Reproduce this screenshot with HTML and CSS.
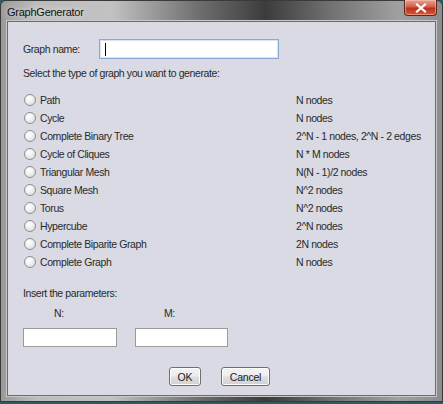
FILE: index.html
```html
<!DOCTYPE html>
<html>
<head>
<meta charset="utf-8">
<link rel="stylesheet" href="styles.css">
</head>
<body>
<div class="window">
  <div class="titlebar">
    <span class="title">GraphGenerator</span>
    <div class="close"><svg width="12" height="10" viewBox="0 0 12 10"><path d="M2 1.5 L10 8.5 M10 1.5 L2 8.5" stroke="#fff" stroke-width="2.2" stroke-linecap="square"/></svg></div>
  </div>
  <div class="client">
    <div class="name-row">
      <span class="lbl name-lbl">Graph name:</span>
      <div class="field name-field"><span class="caret"></span></div>
    </div>
    <div class="lbl select-lbl">Select the type of graph you want to generate:</div>
    <div class="options">
      <div class="opt"><span class="radio"></span><span class="lbl">Path</span></div><div class="lbl info">N nodes</div>
      <div class="opt"><span class="radio"></span><span class="lbl">Cycle</span></div><div class="lbl info">N nodes</div>
      <div class="opt"><span class="radio"></span><span class="lbl">Complete Binary Tree</span></div><div class="lbl info">2^N - 1 nodes, 2^N - 2 edges</div>
      <div class="opt"><span class="radio"></span><span class="lbl">Cycle of Cliques</span></div><div class="lbl info">N * M nodes</div>
      <div class="opt"><span class="radio"></span><span class="lbl">Triangular Mesh</span></div><div class="lbl info">N(N - 1)/2 nodes</div>
      <div class="opt"><span class="radio"></span><span class="lbl">Square Mesh</span></div><div class="lbl info">N^2 nodes</div>
      <div class="opt"><span class="radio"></span><span class="lbl">Torus</span></div><div class="lbl info">N^2 nodes</div>
      <div class="opt"><span class="radio"></span><span class="lbl">Hypercube</span></div><div class="lbl info">2^N nodes</div>
      <div class="opt"><span class="radio"></span><span class="lbl">Complete Biparite Graph</span></div><div class="lbl info">2N nodes</div>
      <div class="opt"><span class="radio"></span><span class="lbl">Complete Graph</span></div><div class="lbl info">N nodes</div>
    </div>
    <div class="lbl params-lbl">Insert the parameters:</div>
    <div class="params">
      <div class="param">
        <span class="lbl plbl n-lbl">N:</span>
        <div class="field pfield n-field"></div>
      </div>
      <div class="param">
        <span class="lbl plbl m-lbl">M:</span>
        <div class="field pfield m-field"></div>
      </div>
    </div>
    <div class="buttons">
      <div class="btn ok">OK</div>
      <div class="btn cancel">Cancel</div>
    </div>
  </div>
</div>
</body>
</html>
```

FILE: styles.css
```css
* { box-sizing: border-box; }
html, body { margin: 0; padding: 0; }
body { width: 443px; height: 404px; overflow: hidden; background: #2d5b60; }

.window {
  width: 443px;
  height: 402px;
  border: 1px solid #3a3a3a;
  border-radius: 6px 6px 0 0;
  background: linear-gradient(90deg, #9a9a9a 0%, #bcbcbc 8%, #c2c2c2 25%, #6e6e6e 45%, #3c3c3c 60%, #727272 75%, #a0a0a0 90%, #8c8c8c 100%);
  display: flex;
  flex-direction: column;
  font-family: "Liberation Sans", Arial, sans-serif;
}

.titlebar {
  height: 20px;
  display: flex;
  align-items: flex-start;
  justify-content: space-between;
  padding-left: 6px;
  padding-right: 5px;
}
.title {
  font-family: "Liberation Sans", Arial, sans-serif;
  font-size: 11px;
  letter-spacing: -0.25px;
  color: #111;
  margin-top: 5px;
  text-shadow: 0 0 6px rgba(255,255,255,0.9);
}
.close {
  width: 33px;
  height: 16px;
  margin-top: -1px;
  border: 1px solid #5a2a22;
  border-top: none;
  border-radius: 0 0 4px 4px;
  background: linear-gradient(180deg, #e8a294 0%, #d0614c 45%, #b8321c 55%, #d65a36 100%);
  display: flex;
  align-items: center;
  justify-content: center;
  box-shadow: inset 0 0 0 1px rgba(255,200,190,0.5);
}

.client {
  margin: 0 6px 5px 6px;
  flex: 1;
  border: 1px solid #6c6c6c;
  background: #d9dae3;
  box-shadow: 0 0 0 1px #c8c8c8;
  padding: 17px 0 0 15px;
  display: flex;
  flex-direction: column;
}

.lbl {
  font-size: 10.5px;
  letter-spacing: -0.4px;
  color: #2a2a2a;
  line-height: 14px;
  white-space: nowrap;
}

.name-row { display: flex; align-items: center; height: 20px; }
.name-lbl { width: 76px; }
.field {
  background: #fff;
  border: 1px solid #a9a9a9;
}
.name-field {
  width: 180px;
  height: 20px;
  border-color: #8aa9d8;
  box-shadow: inset 0 0 0 1px #d8e4f4;
  display: flex;
  align-items: center;
  padding-left: 5px;
}
.caret { width: 1px; height: 13px; background: #000; }

.select-lbl { margin-top: 7px; }

.options {
  margin-top: 11px;
  display: grid;
  grid-template-columns: 273px auto;
  grid-auto-rows: 18px;
  align-items: center;
}
.opt { display: flex; align-items: center; }
.radio {
  width: 12px;
  height: 12px;
  border-radius: 50%;
  border: 1px solid #8e8f8f;
  background: radial-gradient(circle at 40% 35%, #ffffff 0%, #f1f1f1 40%, #d2d2d2 100%);
  margin-left: 1px;
  margin-right: 4px;
}

.params-lbl { margin-top: 15px; }
.params { display: flex; gap: 18px; margin-top: 6px; }
.param { display: flex; flex-direction: column; }
.plbl { height: 14px; }
.n-lbl { margin-left: 31px; }
.m-lbl { margin-left: 29px; }
.pfield { height: 19px; margin-top: 8px; border-color: #9b9b9b; }
.n-field { width: 94px; }
.m-field { width: 93px; }

.buttons {
  margin-top: 20px;
  display: flex;
  justify-content: center;
  gap: 20px;
  padding-right: 19px;
}
.btn {
  height: 19px;
  border: 1px solid #707070;
  border-radius: 3px;
  background: linear-gradient(180deg, #f4f4f4 0%, #ececec 48%, #dedede 52%, #d2d2d2 100%);
  box-shadow: inset 0 0 0 1px #fcfcfc;
  font-size: 10.5px;
  letter-spacing: -0.2px;
  color: #1a1a1a;
  display: flex;
  align-items: center;
  justify-content: center;
}
.ok { width: 32px; }
.cancel { width: 49px; }
```
